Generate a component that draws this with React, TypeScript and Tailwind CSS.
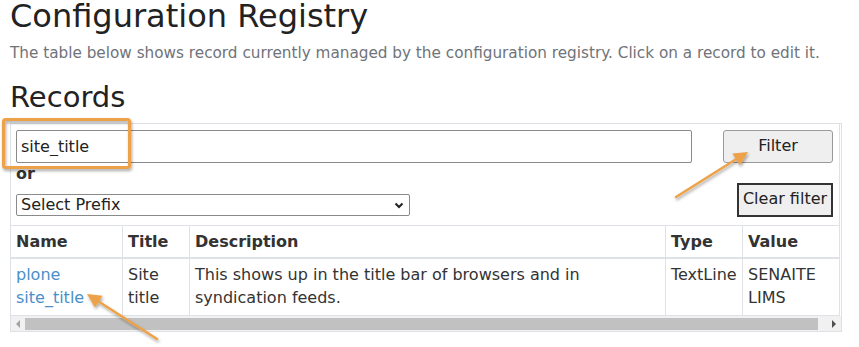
// Configuration registry page - record filter and table

const font = "font-['DejaVu_Sans',_'Liberation_Sans',_sans-serif]";

function Annotations() {
  return (
    <svg
      className="pointer-events-none absolute left-0 top-0"
      width="859"
      height="347"
      viewBox="0 0 859 347"
    >
      <defs>
        <filter id="shadow" x="-20%" y="-20%" width="140%" height="140%">
          <feDropShadow dx="1" dy="2" stdDeviation="1.5" floodColor="#000" floodOpacity="0.35" />
        </filter>
      </defs>
      <g filter="url(#shadow)">
        <rect x="3.5" y="119.5" width="126" height="48" rx="2" fill="none" stroke="#eda148" strokeWidth="3" />
        <line x1="676" y1="197" x2="738" y2="158" stroke="#eda148" strokeWidth="2.5" strokeLinecap="round" />
        <polygon points="748,152 739.8,165.3 732.4,153.5" fill="#eda148" />
        <line x1="157" y1="339" x2="97" y2="300.5" stroke="#eda148" strokeWidth="2.5" strokeLinecap="round" />
        <polygon points="87,294 102.6,295.7 95,307.5" fill="#eda148" />
      </g>
    </svg>
  );
}

function FilterRow() {
  return (
    <div className="col-span-5 flex h-[102px] justify-between border-b border-r border-[#dee2e6] pl-[5px] pr-[6px] pt-[6px]">
      <div className="flex flex-col items-start">
        <input
          type="text"
          defaultValue="site_title"
          className="h-[33px] w-[676px] rounded-[2px] border border-[#8a8a8a] bg-white px-[4px] text-[16px] text-[#222] outline-none"
        />
        <span className="font-bold text-[#333]">or</span>
        <div className="relative mt-[9px]">
          <select className="h-[22px] w-[394px] appearance-none rounded-[2px] border border-[#8a8a8a] bg-white pl-[4px] text-[16px] leading-[20px] text-[#222] outline-none">
            <option>Select Prefix</option>
          </select>
          <svg className="pointer-events-none absolute right-[6px] top-[8px]" width="10" height="7" viewBox="0 0 10 7">
            <path d="M1.5 1.5l3.5 3.5 3.5-3.5" fill="none" stroke="#222" strokeWidth="2" />
          </svg>
        </div>
      </div>
      <div className="flex flex-col items-end gap-[20px]">
        <button className="h-[33px] w-[110px] rounded-[3px] border border-[#9a9a9a] bg-[#efefef] text-[16px] text-[#222]">
          Filter
        </button>
        <button className="flex h-[34px] w-[96px] items-center justify-center border-2 border-[#333] bg-[#efefef] text-[16px] text-[#222]">
          Clear filter
        </button>
      </div>
    </div>
  );
}

const headers = ['Name', 'Title', 'Description', 'Type', 'Value'];

function Scrollbar() {
  return (
    <div className="flex h-[15px] items-center bg-[#f1f1f1]">
      <div className="flex w-[14px] justify-center">
        <div className="h-0 w-0 border-y-[4px] border-r-[4px] border-y-transparent border-r-[#a3a3a3]" />
      </div>
      <div className="h-[12px] w-[793px] bg-[#c1c1c1]" />
      <div className="flex-1" />
      <div className="flex w-[15px] justify-center">
        <div className="h-0 w-0 border-y-[4px] border-l-[4px] border-y-transparent border-l-[#505050]" />
      </div>
    </div>
  );
}

export default function App() {
  return (
    <div className={`relative h-[347px] w-[859px] overflow-hidden bg-white pl-[10px] ${font}`}>
      <h1 className="text-[32px] leading-[32px] text-[#222]">Configuration Registry</h1>
      <p className="mt-[10px] text-[15.25px] leading-[22.5px] text-[#6f737a]">
        The table below shows record currently managed by the configuration registry. Click on a record to edit it.
      </p>
      <h2 className="mt-[18px] text-[29px] leading-[29px] text-[#222]">Records</h2>

      <div className="mt-[11px] w-[832px] border border-[#dee2e6]">
        <div className="grid w-[829px] grid-cols-[112px_67px_476px_77px_97px] text-[16px] leading-[22.86px] text-[#333]">
          <FilterRow />
          {headers.map((h) => (
            <div key={h} className="border-b-2 border-r border-[#dee2e6] px-[5px] pb-[4px] pt-[5px] font-bold">
              {h}
            </div>
          ))}
          <div className="border-b border-r border-[#dee2e6] px-[5px] pb-[5px] pt-[5px]">
            <a href="#" className="text-[#4a8fc9]">
              plone
              <br />
              site_title
            </a>
          </div>
          <div className="border-b border-r border-[#dee2e6] px-[5px] pb-[5px] pt-[5px]">Site title</div>
          <div className="border-b border-r border-[#dee2e6] px-[5px] pb-[5px] pt-[5px]">
            This shows up in the title bar of browsers and in syndication feeds.
          </div>
          <div className="border-b border-r border-[#dee2e6] pb-[5px] pl-[5px] pt-[5px]">TextLine</div>
          <div className="border-b border-r border-[#dee2e6] px-[5px] pb-[5px] pt-[5px]">SENAITE LIMS</div>
        </div>
        <Scrollbar />
      </div>

      <Annotations />
    </div>
  );
}
